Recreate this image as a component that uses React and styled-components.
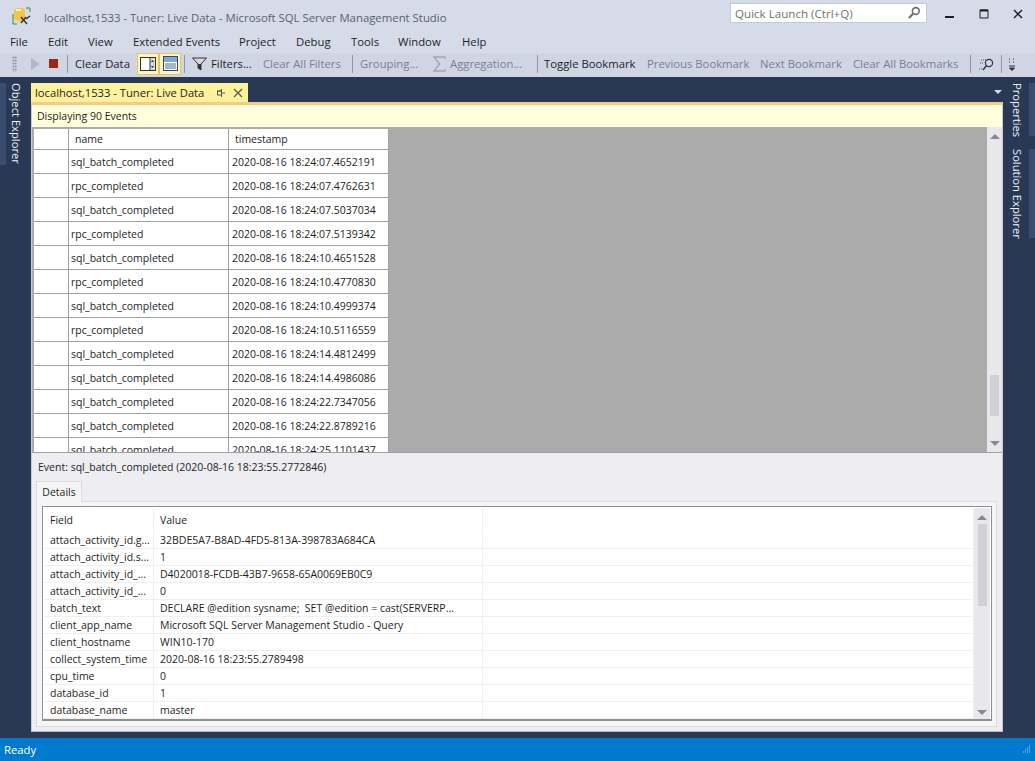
import React from 'react';
import styled, { createGlobalStyle } from 'styled-components';

const GlobalStyle = createGlobalStyle`
  html, body { margin: 0; padding: 0; height: 100%; overflow: hidden; }
  body { font-family: "Open Sans", "Noto Sans", sans-serif; font-size: 11.3px; color: #1e1e1e; background: #d6dbe9; }
  #root { height: 100%; }
`;

const Shell = styled.div`
  width: 1035px;
  height: 761px;
  display: flex;
  flex-direction: column;
  background: #d6dbe9;
`;

const TitleBar = styled.div`
  height: 30px;
  display: flex;
  align-items: center;
  padding: 0 0 0 12px;
  flex: none;
`;

const LogoSlot = styled.div`
  display: flex;
  margin-top: 3px;
`;

const Title = styled.div`
  margin-left: 12px;
  font-size: 11.37px;
  color: #5a5f6e;
  flex: 1;
  padding-top: 5px;
`;

const QuickLaunch = styled.div`
  width: 197px;
  height: 20px;
  box-sizing: border-box;
  background: #fff;
  border: 1px solid #c4c9d6;
  margin-top: -4px;
  padding: 0 5px 0 4px;
  display: flex;
  align-items: center;
  justify-content: space-between;
  color: #717171;
  font-size: 11.6px;
`;

const WindowButtons = styled.div`
  display: flex;
  margin: -2px 0 0 6px;
  width: 102px;
  height: 28px;
  align-items: center;
`;

const WindowButton = styled.div`
  width: 34px;
  display: flex;
  justify-content: center;
`;

const MenuBar = styled.div`
  height: 23px;
  display: flex;
  align-items: center;
  padding-left: 10px;
  flex: none;
`;

const MenuItem = styled.div`
  width: ${p => p.$w}px;
  font-size: 11.3px;
  color: #1e1e1e;
`;

const Toolbar = styled.div`
  height: 24px;
  box-sizing: border-box;
  padding: 0 0 3px 12px;
  display: flex;
  align-items: center;
  background: #d0d5e3;
  flex: none;
`;

const Grip = styled.div`
  width: 5px;
  height: 16px;
  margin-right: 9px;
  background-image: radial-gradient(#99a0b3 0.8px, transparent 1px);
  background-size: 2.5px 3px;
`;

const ToolText = styled.div`
  width: ${p => p.$w}px;
  margin-left: ${p => p.$ml ?? 0}px;
  flex: none;
  font-size: 11.3px;
  white-space: nowrap;
  color: ${p => (p.$off ? '#7a7f8d' : '#1e1e1e')};
`;

const ToolSep = styled.div`
  width: 1px;
  height: 18px;
  background: #9097a8;
  margin: 0 ${p => p.$r ?? 6}px 0 ${p => p.$l ?? 0}px;
  flex: none;
`;

const ToolIcon = styled.div`
  width: ${p => p.$w}px;
  height: 20px;
  flex: none;
  display: flex;
  align-items: center;
  justify-content: center;
`;

const ToggleIcon = styled(ToolIcon)`
  width: 22px;
  height: 22px;
  box-sizing: border-box;
  background: #fdf4bf;
  border: 1px solid #e5c365;
`;

const Workspace = styled.div`
  flex: 1;
  background: #293955;
  display: flex;
  min-height: 0;
`;

const LeftRail = styled.div`
  width: 31px;
  flex: none;
  padding-top: 6px;
  box-sizing: border-box;
`;

const RightRail = styled.div`
  flex: 1;
  padding: 6px 0 0 5px;
  display: flex;
  flex-direction: column;
  gap: 13px;
`;

const RailTab = styled.div`
  writing-mode: vertical-rl;
  width: 27px;
  height: ${p => p.$h}px;
  box-sizing: border-box;
  padding-right: 4px;
  border-right: 6px solid #3a4d70;
  color: #f0f2f8;
  font-size: 11.2px;
  white-space: nowrap;
  line-height: 16px;
`;

const LeftTab = styled(RailTab)`
  width: 24px;
  padding-right: 0;
  padding-left: 2px;
  border-right: none;
  border-left: 6px solid #3a4d70;
`;

const Center = styled.div`
  width: 972px;
  flex: none;
  display: flex;
  flex-direction: column;
  padding: 6px 0;
  box-sizing: border-box;
`;

const TabStrip = styled.div`
  height: 19px;
  flex: none;
  display: flex;
  justify-content: space-between;
`;

const DocTab = styled.div`
  width: 217px;
  box-sizing: border-box;
  background: #fff29d;
  display: flex;
  align-items: center;
  padding: 0 5px 0 4px;
  font-size: 11.2px;
  color: #1e1e1e;
`;

const DocTabLabel = styled.div`
  flex: 1;
  white-space: nowrap;
`;

const CloseSlot = styled.div`
  display: flex;
  margin-left: 8px;
`;

const Panel = styled.div`
  flex: 1;
  display: flex;
  flex-direction: column;
  min-height: 0;
  background: #eeeef2;
  border-top: 3px solid #f5cc84;
  border-left: 1px solid #c7cbd6;
  border-right: 1px solid #c7cbd6;
  border-bottom: 1px solid #b5b9c6;
`;

const InfoBar = styled.div`
  height: 22px;
  flex: none;
  background: #ffffdc;
  display: flex;
  align-items: center;
  padding-left: 5px;
  font-size: 10.5px;
  color: #1e1e1e;
`;

const EventsArea = styled.div`
  height: 326px;
  flex: none;
  background: #ababab;
  display: flex;
  border-bottom: 1px solid #a0a0a0;
  box-sizing: border-box;
`;

const EventsClip = styled.div`
  flex: 1;
  overflow: hidden;
  padding: 2px 0 0 2px;
`;

const EventsTable = styled.div`
  width: 355px;
  display: grid;
  grid-template-columns: 35px 160px 160px;
  grid-template-rows: 21px;
  grid-auto-rows: 24px;
  background: #fff;
`;

const HeadCell = styled.div`
  background: #fff;
  box-sizing: border-box;
  border-right: 1px solid #a0a0a0;
  border-bottom: 1px solid #a0a0a0;
  padding-left: 6px;
  display: flex;
  align-items: center;
  font-size: 10.5px;
  color: #1e1e1e;
`;

const Cell = styled.div`
  box-sizing: border-box;
  border-right: 1px solid #a0a0a0;
  border-bottom: 1px solid #a0a0a0;
  padding-left: ${p => p.$pad ?? 2}px;
  display: flex;
  align-items: center;
  font-size: 10.5px;
  white-space: nowrap;
  color: #1e1e1e;
`;

const Scrollbar = styled.div`
  width: ${p => p.$w}px;
  flex: none;
  background: #e8e8ec;
  display: flex;
  flex-direction: column;
  align-items: center;
  position: relative;
`;

const Thumb = styled.div`
  position: absolute;
  left: ${p => p.$l}px;
  top: ${p => p.$t}px;
  width: 9px;
  height: ${p => p.$h}px;
  background: #d0d1d7;
`;

const Arrow = styled.div`
  position: absolute;
  ${p => (p.$up ? `top: ${p.$o}px;` : `bottom: ${p.$o}px;`)}
  left: 50%;
  margin-left: -5px;
  width: 0;
  height: 0;
  border-left: 5px solid transparent;
  border-right: 5px solid transparent;
  ${p => (p.$up ? 'border-bottom: 5px solid #868999;' : 'border-top: 5px solid #868999;')}
`;

const EventLine = styled.div`
  height: 28px;
  flex: none;
  padding-left: 6px;
  display: flex;
  align-items: center;
  font-size: 10.5px;
  color: #1e1e1e;
`;

const TabsRow = styled.div`
  height: 20px;
  flex: none;
  padding-left: 4px;
  display: flex;
  position: relative;
  z-index: 1;
`;

const DetailTab = styled.div`
  width: 46px;
  box-sizing: border-box;
  height: 21px;
  background: #f5f5f7;
  border: 1px solid #dcdce0;
  border-bottom: none;
  display: flex;
  align-items: center;
  justify-content: center;
  font-size: 10.5px;
`;

const DetailsBox = styled.div`
  margin: 0 5px 4px 4px;
  flex: 1;
  min-height: 0;
  box-sizing: border-box;
  background: #f5f5f7;
  border: 1px solid #dcdce0;
  padding: 4px 4px 5px 5px;
  display: flex;
`;

const DetailsFrame = styled.div`
  flex: 1;
  display: flex;
  min-width: 0;
  background: #fff;
  border: 1px solid #8f8f8f;
  border-bottom-width: 2px;
  padding: 1px 1px 0 1px;
`;

const DetailsGrid = styled.div`
  flex: 1;
  min-width: 0;
  display: grid;
  grid-template-columns: 110px 329px 1fr;
  grid-template-rows: 24px;
  grid-auto-rows: 17px;
  overflow: hidden;
`;

const DetailHead = styled.div`
  border-right: 1px solid #f0f0f0;
  padding-left: ${p => p.$pad}px;
  display: flex;
  align-items: center;
  font-size: 10.5px;
  margin-bottom: 1px;
`;

const DetailCell = styled.div`
  border-right: 1px solid #f0f0f0;
  border-bottom: 1px solid #f0f0f0;
  box-sizing: border-box;
  padding-left: ${p => p.$pad}px;
  display: flex;
  align-items: center;
  font-size: 10.5px;
  white-space: pre;
  overflow: hidden;
`;

const StatusBar = styled.div`
  height: 23px;
  flex: none;
  background: #007acc;
  color: #fff;
  display: flex;
  align-items: center;
  justify-content: space-between;
  padding: 0 4px;
  font-size: 11.3px;
`;

const events = [
  ['sql_batch_completed', '2020-08-16 18:24:07.4652191'],
  ['rpc_completed', '2020-08-16 18:24:07.4762631'],
  ['sql_batch_completed', '2020-08-16 18:24:07.5037034'],
  ['rpc_completed', '2020-08-16 18:24:07.5139342'],
  ['sql_batch_completed', '2020-08-16 18:24:10.4651528'],
  ['rpc_completed', '2020-08-16 18:24:10.4770830'],
  ['sql_batch_completed', '2020-08-16 18:24:10.4999374'],
  ['rpc_completed', '2020-08-16 18:24:10.5116559'],
  ['sql_batch_completed', '2020-08-16 18:24:14.4812499'],
  ['sql_batch_completed', '2020-08-16 18:24:14.4986086'],
  ['sql_batch_completed', '2020-08-16 18:24:22.7347056'],
  ['sql_batch_completed', '2020-08-16 18:24:22.8789216'],
  ['sql_batch_completed', '2020-08-16 18:24:25.1101437'],
];

const details = [
  ['attach_activity_id.g...', '32BDE5A7-B8AD-4FD5-813A-398783A684CA'],
  ['attach_activity_id.s...', '1'],
  ['attach_activity_id_...', 'D4020018-FCDB-43B7-9658-65A0069EB0C9'],
  ['attach_activity_id_...', '0'],
  ['batch_text', 'DECLARE @edition sysname;  SET @edition = cast(SERVERP...'],
  ['client_app_name', 'Microsoft SQL Server Management Studio - Query'],
  ['client_hostname', 'WIN10-170'],
  ['collect_system_time', '2020-08-16 18:23:55.2789498'],
  ['cpu_time', '0'],
  ['database_id', '1'],
  ['database_name', 'master'],
];

const menus = [
  ['File', 38], ['Edit', 40], ['View', 45], ['Extended Events', 106], ['Project', 57],
  ['Debug', 55], ['Tools', 47], ['Window', 64], ['Help', 40],
];

const AppLogo = () => (
  <svg width="20" height="20" viewBox="0 0 20 20">
    <path d="M1 7V17H5M14 1H18V5" fill="none" stroke="#3a8a3a" strokeWidth="1" />
    <path d="M2 3l3-2h6l2 2v8l-5 4-6-3z" fill="#f2c64b" />
    <path d="M4 2h5v2H4z" fill="#fbeeb8" />
    <path d="M9 16l5-6M9 10l6 7M14 12l4-3" fill="none" stroke="#333" strokeWidth="1.4" />
  </svg>
);

const SearchIcon = () => (
  <svg width="14" height="14" viewBox="0 0 14 14">
    <circle cx="8.8" cy="5" r="3.4" fill="none" stroke="#6f6f6f" strokeWidth="1.6" />
    <path d="M6.2 7.6L2 12" stroke="#6f6f6f" strokeWidth="2.2" />
  </svg>
);

const LayoutIconA = () => (
  <svg width="16" height="14" viewBox="0 0 16 14">
    <rect x="0.5" y="0.5" width="15" height="13" fill="#fff" stroke="#333" />
    <rect x="10" y="1" width="5" height="12" fill="#d9d9d9" />
    <path d="M10 1v12" stroke="#333" />
    <path d="M11 5l1.5-2 1.5 2zM11 9l1.5 2 1.5-2z" fill="#333" />
  </svg>
);

const LayoutIconB = () => (
  <svg width="15" height="15" viewBox="0 0 15 15">
    <rect x="0.5" y="0.5" width="14" height="14" fill="#fff" stroke="#2e4a73" />
    <rect x="1" y="1" width="13" height="5" fill="#7fa8d8" />
    <path d="M2 8h11M2 10h11M2 12h11" stroke="#4a6b9a" />
  </svg>
);

const FilterIcon = () => (
  <svg width="15" height="14" viewBox="0 0 15 14">
    <path d="M0.5 1h14L9 7v6l-3-2V7z" fill="#d8d8d8" stroke="#333" strokeWidth="1" />
    <path d="M6 7v4l3 2V7z" fill="#333" />
  </svg>
);

const SigmaIcon = () => (
  <svg width="13" height="16" viewBox="0 0 13 16">
    <path d="M12 3V1H1l5.5 7L1 15h11v-2" fill="none" stroke="#a2a6b3" strokeWidth="1.4" />
  </svg>
);

const FindIcon = () => (
  <svg width="16" height="14" viewBox="0 0 16 14">
    <circle cx="10" cy="6" r="3.6" fill="none" stroke="#333" strokeWidth="1.2" />
    <path d="M7.5 8.5L4 13" stroke="#333" strokeWidth="1.4" />
    <path d="M2 3h5M1 6h4M0 12h3" stroke="#555" strokeWidth="1" strokeDasharray="1 1" />
  </svg>
);

const PinIcon = () => (
  <svg width="10" height="10" viewBox="0 0 10 10">
    <path d="M3 2.5h4v4H3zM1 6.5h8M5 6.5V10M7 2.5v4" fill="none" stroke="#555" strokeWidth="1" transform="rotate(-90 5 5)" />
  </svg>
);

const App = () => (
  <Shell>
    <GlobalStyle />
    <TitleBar>
      <LogoSlot><AppLogo /></LogoSlot>
      <Title>localhost,1533 - Tuner: Live Data - Microsoft SQL Server Management Studio</Title>
      <QuickLaunch>
        Quick Launch (Ctrl+Q)
        <SearchIcon />
      </QuickLaunch>
      <WindowButtons>
        <WindowButton>
          <svg width="10" height="10" viewBox="0 0 10 10"><path d="M0 8h9" stroke="#1e1e1e" strokeWidth="2" /></svg>
        </WindowButton>
        <WindowButton>
          <svg width="10" height="10" viewBox="0 0 10 10"><path d="M1 1h8v8H1z" fill="none" stroke="#1e1e1e" /><path d="M1 1.5h8" stroke="#1e1e1e" strokeWidth="2" /></svg>
        </WindowButton>
        <WindowButton>
          <svg width="10" height="10" viewBox="0 0 10 10"><path d="M1 1l8 8M9 1l-8 8" stroke="#1e1e1e" strokeWidth="1.4" /></svg>
        </WindowButton>
      </WindowButtons>
    </TitleBar>
    <MenuBar>
      {menus.map(([name, w]) => <MenuItem key={name} $w={w}>{name}</MenuItem>)}
    </MenuBar>
    <Toolbar>
      <Grip />
      <ToolIcon $w={18}>
        <svg width="9" height="12" viewBox="0 0 9 12"><path d="M0 0l9 6-9 6z" fill="#b4b8c4" /></svg>
      </ToolIcon>
      <ToolIcon $w={20}>
        <svg width="10" height="10" viewBox="0 0 10 10"><rect width="9" height="9" fill="#972a12" /></svg>
      </ToolIcon>
      <ToolSep $l={3} $r={7} />
      <ToolText $w={62}>Clear Data</ToolText>
      <ToggleIcon><LayoutIconA /></ToggleIcon>
      <ToggleIcon><LayoutIconB /></ToggleIcon>
      <ToolSep $l={3} $r={7} />
      <ToolIcon $w={15}><FilterIcon /></ToolIcon>
      <ToolText $w={52} $ml={4}>Filters...</ToolText>
      <ToolText $w={89} $off>Clear All Filters</ToolText>
      <ToolSep $r={7} />
      <ToolText $w={72} $off>Grouping...</ToolText>
      <ToolIcon $w={14}><SigmaIcon /></ToolIcon>
      <ToolText $w={87} $off $ml={4}>Aggregation...</ToolText>
      <ToolSep $r={6} />
      <ToolText $w={103}>Toggle Bookmark</ToolText>
      <ToolText $w={113} $off>Previous Bookmark</ToolText>
      <ToolText $w={93} $off>Next Bookmark</ToolText>
      <ToolText $w={117} $off>Clear All Bookmarks</ToolText>
      <ToolSep $r={8} />
      <ToolIcon $w={16}><FindIcon /></ToolIcon>
      <ToolSep $l={6} $r={6} />
      <svg width="8" height="16" viewBox="0 0 8 16"><path d="M1 3h1M5 3h1M1 6h1M5 6h1M1 10h6M1.5 12h5l-2.5 2.5z" stroke="#333" fill="#333" strokeWidth="1" /></svg>
    </Toolbar>
    <Workspace>
      <LeftRail>
        <LeftTab $h={82}>Object Explorer</LeftTab>
      </LeftRail>
      <Center>
        <TabStrip>
          <DocTab>
            <DocTabLabel>localhost,1533 - Tuner: Live Data</DocTabLabel>
            <PinIcon />
            <CloseSlot>
              <svg width="10" height="10" viewBox="0 0 10 10">
                <path d="M1 1l8 8M9 1l-8 8" stroke="#5c5c50" strokeWidth="1.3" />
              </svg>
            </CloseSlot>
          </DocTab>
          <svg width="10" height="19" viewBox="0 0 10 19">
            <path d="M1 7h8l-4 4z" fill="#d6dbe9" />
          </svg>
        </TabStrip>
        <Panel>
          <InfoBar>Displaying 90 Events</InfoBar>
          <EventsArea>
            <EventsClip>
              <EventsTable>
                <HeadCell />
                <HeadCell>name</HeadCell>
                <HeadCell>timestamp</HeadCell>
                {events.map(([name, ts]) => (
                  <React.Fragment key={ts}>
                    <Cell />
                    <Cell>{name}</Cell>
                    <Cell $pad={3}>{ts}</Cell>
                  </React.Fragment>
                ))}
              </EventsTable>
            </EventsClip>
            <Scrollbar $w={15}>
              <Arrow $up $o={7} />
              <Thumb $l={3} $t={248} $h={41} />
              <Arrow $o={6} />
            </Scrollbar>
          </EventsArea>
          <EventLine>Event: sql_batch_completed (2020-08-16 18:23:55.2772846)</EventLine>
          <TabsRow><DetailTab>Details</DetailTab></TabsRow>
          <DetailsBox>
            <DetailsFrame>
              <DetailsGrid>
                <DetailHead $pad={6}>Field</DetailHead>
                <DetailHead $pad={6}>Value</DetailHead>
                <DetailHead />
                {details.map(([field, value], i) => (
                  <React.Fragment key={i}>
                    <DetailCell $pad={6}>{field}</DetailCell>
                    <DetailCell $pad={6}>{value}</DetailCell>
                    <DetailCell />
                  </React.Fragment>
                ))}
              </DetailsGrid>
              <Scrollbar $w={16}>
                <Arrow $up $o={7} />
                <Thumb $l={4} $t={16} $h={82} />
                <Arrow $o={4} />
              </Scrollbar>
            </DetailsFrame>
          </DetailsBox>
        </Panel>
      </Center>
      <RightRail>
        <RailTab $h={53}>Properties</RailTab>
        <RailTab $h={89}>Solution Explorer</RailTab>
      </RightRail>
    </Workspace>
    <StatusBar>
      Ready
      <svg width="10" height="10" viewBox="0 0 10 10">
        <path d="M8 1h1M6 3h1M8 3h1M4 5h1M6 5h1M8 5h1M2 7h1M4 7h1M6 7h1M8 7h1" stroke="#9ecdf0" strokeWidth="1" />
      </svg>
    </StatusBar>
  </Shell>
);

export default App;
